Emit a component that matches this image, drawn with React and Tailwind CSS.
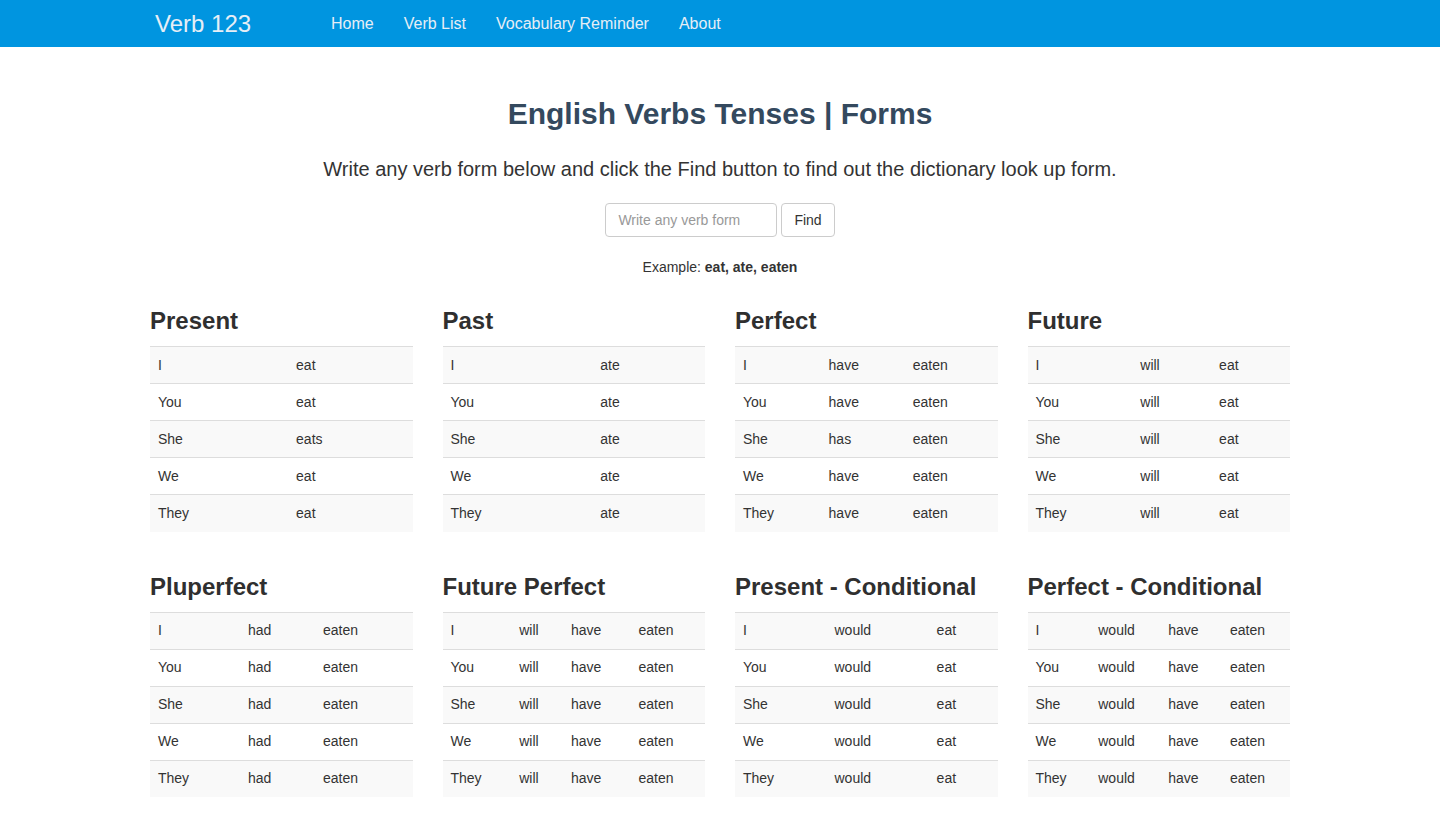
const sections = [
  ["Present", [["I","eat"],["You","eat"],["She","eats"],["We","eat"],["They","eat"]]],
  ["Past", [["I","ate"],["You","ate"],["She","ate"],["We","ate"],["They","ate"]]],
  ["Perfect", [["I","have","eaten"],["You","have","eaten"],["She","has","eaten"],["We","have","eaten"],["They","have","eaten"]]],
  ["Future", [["I","will","eat"],["You","will","eat"],["She","will","eat"],["We","will","eat"],["They","will","eat"]]],
  ["Pluperfect", [["I","had","eaten"],["You","had","eaten"],["She","had","eaten"],["We","had","eaten"],["They","had","eaten"]]],
  ["Future Perfect", [["I","will","have","eaten"],["You","will","have","eaten"],["She","will","have","eaten"],["We","will","have","eaten"],["They","will","have","eaten"]]],
  ["Present - Conditional", [["I","would","eat"],["You","would","eat"],["She","would","eat"],["We","would","eat"],["They","would","eat"]]],
  ["Perfect - Conditional", [["I","would","have","eaten"],["You","would","have","eaten"],["She","would","have","eaten"],["We","would","have","eaten"],["They","would","have","eaten"]]],
];

export default function App() {
  return (
    <div className="min-h-screen bg-white text-[#333] text-[14px]" style={{fontFamily: '"Liberation Sans", Arial, sans-serif'}}>
      <nav className="bg-[#0095e0] h-[47px]">
        <div className="w-[1170px] mx-auto px-[15px] flex items-center h-full">
          <span className="text-[24px] text-[#e6eef6] ml-[5px] w-[176px]">Verb 123</span>
          <div className="flex gap-[30px] text-[16px] text-[#e6eef6]">
            <span>Home</span><span>Verb List</span><span>Vocabulary Reminder</span><span>About</span>
          </div>
        </div>
      </nav>
      <div className="w-[1170px] mx-auto px-[15px]">
        <h1 className="text-center text-[30px] font-bold text-[#34495e] mt-[48px] leading-[38px]">English Verbs Tenses | Forms</h1>
        <p className="text-center text-[20px] font-light mt-[22px] leading-[28px]">Write any verb form below and click the Find button to find out the dictionary look up form.</p>
        <div className="flex justify-center gap-[4px] mt-[20px]">
          <input placeholder="Write any verb form" className="w-[172px] h-[34px] border border-[#ccc] rounded-[4px] px-[12px] text-[14px] placeholder:text-[#999] outline-none" />
          <button className="h-[34px] px-[12px] border border-[#ccc] rounded-[4px] bg-white">Find</button>
        </div>
        <p className="text-center mt-[20px]">Example: <b>eat, ate, eaten</b></p>
        <div className="grid grid-cols-4 gap-x-[30px] gap-y-[40px] mt-[28px]">
          {sections.map(([title, rows]) => (
            <div key={title}>
              <h3 className="text-[24px] font-bold text-[#2f2f2f] leading-[30px] mb-[10px]">{title}</h3>
              <table className="w-full border-collapse">
                <tbody>
                  {rows.map((r, i) => (
                    <tr key={i} className={i % 2 === 0 ? "bg-[#f9f9f9]" : ""}>
                      {r.map((c, j) => (
                        <td key={j} className="border-t border-[#ddd] px-[8px] h-[37px] align-middle">{c}</td>
                      ))}
                    </tr>
                  ))}
                </tbody>
              </table>
            </div>
          ))}
        </div>
      </div>
    </div>
  );
}
